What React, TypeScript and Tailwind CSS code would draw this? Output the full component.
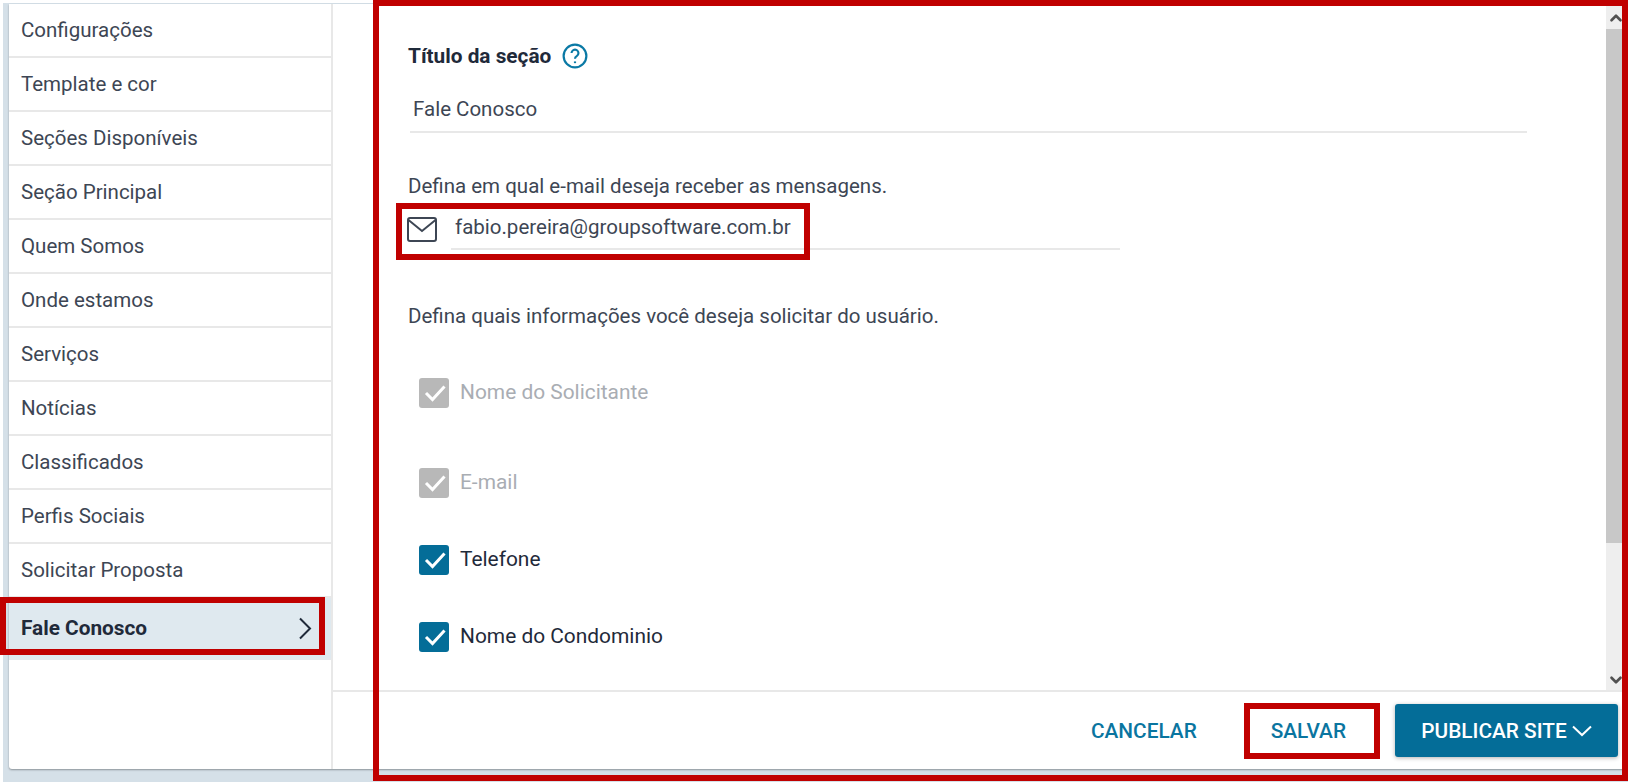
import { ChevronDown, ChevronUp } from "lucide-react";

const menu = [
  "Configurações",
  "Template e cor",
  "Seções Disponíveis",
  "Seção Principal",
  "Quem Somos",
  "Onde estamos",
  "Serviços",
  "Notícias",
  "Classificados",
  "Perfis Sociais",
  "Solicitar Proposta",
];

const RedBox = ({ className }: { className: string }) => (
  <div className={`pointer-events-none absolute border-[6px] border-[#c00000] ${className}`} />
);

const Check = ({ label, state, className }: { label: string; state: "off" | "on"; className: string }) => (
  <div className={`flex items-center ${className}`}>
    <div
      className={
        state === "on"
          ? "h-[30px] w-[30px] rounded-[3px] bg-[#046d98]"
          : "h-[30px] w-[30px] rounded-[3px] bg-[#b8b8b8]"
      }
    >
      <svg width="30" height="30" viewBox="0 0 30 30" fill="none">
        <path d="M7 15 L13.5 21.5 L25.5 8.5" stroke="white" strokeWidth="3" />
      </svg>
    </div>
    <span
      className={
        state === "on"
          ? "ml-[11px] pb-[2px] text-[20.9px] text-[#1f2a3a]"
          : "ml-[11px] pb-[2px] text-[20.9px] text-[#a9adb3]"
      }
    >
      {label}
    </span>
  </div>
);

export default function App() {
  return (
    <div className="relative h-[782px] w-[1628px] overflow-hidden bg-white pl-[3px] pt-[3px] font-['Roboto',sans-serif] text-[20.5px] leading-[26px] text-[#3d4654]">
      <div className="h-full bg-[#d5e0e8] pb-[10px] pl-[6px] pt-px">
        <div className="flex h-[765px] rounded-bl-[3px] bg-white shadow-[0_1px_2px_rgba(0,0,0,0.35)]">
          <nav className="flex w-[322px] shrink-0 flex-col">
            {menu.map((item) => (
              <div key={item} className="flex h-[54px] items-center border-b-2 border-[#e8e8e8] pb-[1px] pl-[12px]">
                {item}
              </div>
            ))}
            <div className="flex h-[62px] items-center justify-between border-b-2 border-[#e3e8ec] bg-[#dfe9ef] pl-[12px] pr-[19px] text-[20.8px] font-bold text-[#1f2a3a]">
              Fale Conosco
              <svg width="14" height="23" viewBox="0 0 14 23" fill="none" stroke="#1f2a3a" strokeWidth="2">
                <path d="M2 1.5 L12 11.5 L2 21.5" />
              </svg>
            </div>
          </nav>
          <main className="flex min-w-0 flex-1 flex-col border-l-2 border-[#e8e8e8]">
            <div className="flex h-[688px] border-b-2 border-[#e8e8e8]">
              <div className="flex-1 pl-[75px] pt-[39px]">
                <div className="flex items-center">
                  <span className="text-[20.8px] font-bold text-[#1f2a3a]">Título da seção</span>
                  <svg className="ml-[11px]" width="26" height="26" viewBox="0 0 24 24" fill="none" stroke="#0a79a5" strokeWidth="2">
                    <circle cx="12" cy="12" r="10.5" />
                    <path d="M8.8 9.3a3.2 3.2 0 1 1 4.8 2.8c-1 .6-1.6 1.2-1.6 2.4" />
                    <path d="M12 17v1.6" />
                  </svg>
                </div>
                <div className="ml-[2px] mt-[26px] h-[38px] w-[1117px] border-b-2 border-[#e8e8e8] pl-[3px] pt-[1px]">Fale Conosco</div>
                <div className="mt-[40px]">Defina em qual e-mail deseja receber as mensagens.</div>
                <div className="mt-[8px] flex h-[43px]">
                  <svg className="-ml-px mt-[10px]" width="30" height="25" viewBox="0 0 30 25" fill="none" stroke="#3d4654" strokeWidth="2">
                    <rect x="1" y="1" width="28" height="23" rx="2" />
                    <path d="M1.5 3 L15 14 L28.5 3" />
                  </svg>
                  <div className="ml-[14px] h-[43px] w-[669px] border-b-2 border-[#e8e8e8] pl-[4px] pt-[7px]">fabio.pereira@groupsoftware.com.br</div>
                </div>
                <div className="mt-[53px]">Defina quais informações você deseja solicitar do usuário.</div>
                <Check label="Nome do Solicitante" state="off" className="ml-[11px] mt-[49px]" />
                <Check label="E-mail" state="off" className="ml-[11px] mt-[60px]" />
                <Check label="Telefone" state="on" className="ml-[11px] mt-[47px]" />
                <Check label="Nome do Condominio" state="on" className="ml-[11px] mt-[47px]" />
              </div>
              <div className="mr-[2px] mt-[2px] flex w-[20px] flex-col bg-[#eeeeee] text-[#505050]">
                <div className="flex h-[23px] items-center justify-center">
                  <ChevronUp size={18} strokeWidth={3.5} />
                </div>
                <div className="h-[514px] bg-[#c8c8c8]" />
                <div className="mt-auto flex h-[20px] items-center justify-center">
                  <ChevronDown size={18} strokeWidth={3.5} />
                </div>
              </div>
            </div>
            <div className="flex flex-1 items-center justify-end pr-[10px] text-[20.8px] font-medium">
              <button className="text-[#0a75a0]">CANCELAR</button>
              <button className="ml-[74px] text-[#0a75a0]">SALVAR</button>
              <button className="ml-[49px] flex h-[53px] w-[223px] items-center justify-center rounded-[3px] bg-[#046d98] text-white shadow-[0_1px_4px_rgba(0,0,0,0.3)]">
                PUBLICAR SITE
                <svg className="ml-[5px]" width="20" height="12" viewBox="0 0 20 12" fill="none" stroke="white" strokeWidth="2">
                  <path d="M1 1.5 L10 10 L19 1.5" />
                </svg>
              </button>
            </div>
          </main>
        </div>
      </div>
      <RedBox className="left-[373px] top-0 h-[781px] w-[1255px]" />
      <RedBox className="left-0 top-[597px] h-[58px] w-[325px]" />
      <RedBox className="left-[396px] top-[203px] h-[57px] w-[414px]" />
      <RedBox className="left-[1244px] top-[703px] h-[56px] w-[136px]" />
    </div>
  );
}
